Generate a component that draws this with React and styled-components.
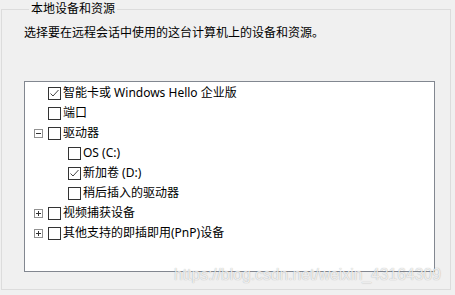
import styled, { createGlobalStyle } from "styled-components";

const GlobalStyle = createGlobalStyle`
  html, body {
    margin: 0;
    padding: 0;
    background: #f0f0f0;
  }
  body {
    font-family: "Noto Sans", "Noto Sans CJK SC", sans-serif;
    font-size: 12px;
    color: #000;
  }
`;

const Page = styled.div`
  position: relative;
  width: 455px;
  height: 295px;
  padding: 0 4px 0 1px;
  box-sizing: border-box;
  overflow: hidden;
`;

const Group = styled.fieldset`
  margin: 0;
  padding: 0 0 0 22px;
  height: 290px;
  box-sizing: border-box;
  border: 1px solid #dcdcdc;
`;

const Legend = styled.legend`
  margin-left: 5px;
  padding: 0 2px;
  line-height: 18px;
`;

const Hint = styled.div`
  margin-top: 7px;
  line-height: 16px;
`;

const TreeBox = styled.div`
  margin-top: 40px;
  width: 411px;
  height: 191px;
  box-sizing: border-box;
  border: 1px solid #828790;
  background: #fff;
  padding-top: 1px;
`;

const Row = styled.div`
  display: flex;
  align-items: center;
  height: 20px;
  padding-left: ${(p) => 9 + p.$level * 20}px;
`;

const Expander = styled.span`
  width: 14px;
  height: 9px;
  flex: none;
  display: flex;
`;

const Check = styled.span`
  width: 13px;
  height: 13px;
  flex: none;
  box-sizing: border-box;
  border: 1px solid #333;
  background: #fff;
  display: flex;
  margin-right: 2px;
`;

const Label = styled.span`
  line-height: 16px;
  white-space: nowrap;
`;

const Watermark = styled.div`
  position: absolute;
  left: 174px;
  top: 266px;
  font-family: "Liberation Sans", Arial, sans-serif;
  font-size: 15.7px;
  line-height: 18px;
  white-space: nowrap;
  color: rgba(255, 255, 255, 0.8);
  text-shadow: 0 0 1px rgba(0, 0, 0, 0.35);
  pointer-events: none;
`;

const ExpandIcon = ({ open }) => (
  <svg width="9" height="9" viewBox="0 0 9 9">
    <rect x="0.5" y="0.5" width="8" height="8" fill="#fff" stroke="#919191" />
    <path d="M2 4.5h5" stroke="#333" />
    {!open && <path d="M4.5 2v5" stroke="#333" />}
  </svg>
);

const CheckMark = () => (
  <svg width="11" height="11" viewBox="0 0 11 11">
    <path d="M1.5 5.5l2.5 2.5 5.5-6" fill="none" stroke="#444" strokeWidth="1" />
  </svg>
);

const items = [
  { level: 0, label: "智能卡或 Windows Hello 企业版", checked: true },
  { level: 0, label: "端口" },
  { level: 0, label: "驱动器", expander: "open" },
  { level: 1, label: "OS (C:)" },
  { level: 1, label: "新加卷 (D:)", checked: true },
  { level: 1, label: "稍后插入的驱动器" },
  { level: 0, label: "视频捕获设备", expander: "closed" },
  { level: 0, label: "其他支持的即插即用(PnP)设备", expander: "closed" },
];

export default function App() {
  return (
    <>
      <GlobalStyle />
      <Page>
        <Group>
          <Legend>本地设备和资源</Legend>
          <Hint>选择要在远程会话中使用的这台计算机上的设备和资源。</Hint>
          <TreeBox>
            {items.map((it) => (
              <Row key={it.label} $level={it.level}>
                <Expander>
                  {it.expander && <ExpandIcon open={it.expander === "open"} />}
                </Expander>
                <Check>{it.checked && <CheckMark />}</Check>
                <Label>{it.label}</Label>
              </Row>
            ))}
          </TreeBox>
        </Group>
        <Watermark>https://blog.csdn.net/weixin_43164309</Watermark>
      </Page>
    </>
  );
}
